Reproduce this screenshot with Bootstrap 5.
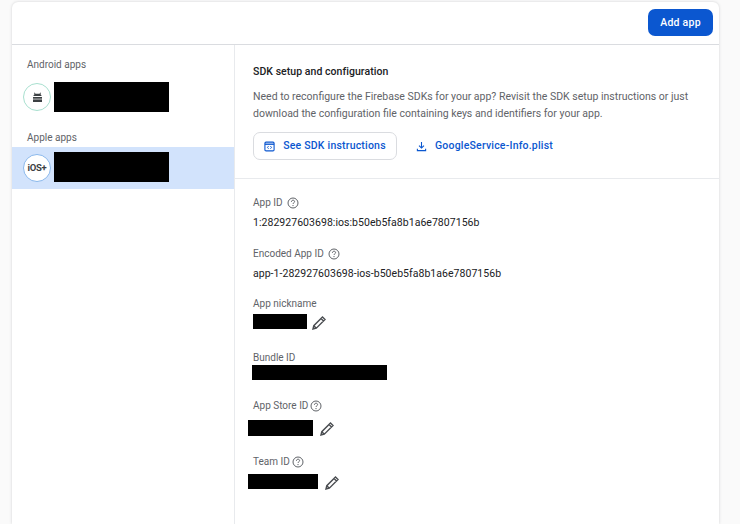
<!DOCTYPE html>
<html lang="en">

<head>
    <meta charset="UTF-8">
    <meta name="viewport" content="width=device-width, initial-scale=1.0">
    <title>Your apps</title>
    <link href="https://cdn.jsdelivr.net/npm/bootstrap@5.3.3/dist/css/bootstrap.min.css" rel="stylesheet">
    <style>
        html, body {
            height: 524px;
            overflow: hidden;
        }

        body {
            background-color: #fafafa;
            font-family: Roboto, "Liberation Sans", sans-serif;
            font-size: 12px;
            color: #202124;
            padding: 2px 21px 0 12px;
        }

        .apps-panel {
            height: 522px;
            background-color: #fff;
            border-radius: 6px 6px 0 0;
            box-shadow: 0 0 3px rgba(60, 64, 67, 0.22);
        }

        .apps-head {
            height: 43px;
            flex-shrink: 0;
            padding: 7px 6px 0 0;
            border-bottom: 1px solid #dadce0;
        }

        .add-btn {
            width: 65px;
            height: 27px;
            padding: 0;
            background-color: #0b57d0;
            border: 0;
            border-radius: 7px;
            color: #fff;
            font-size: 10.5px;
            font-weight: 500;
            letter-spacing: 0.25px;
        }

        .side-col {
            width: 223px;
            flex-shrink: 0;
            border-right: 1px solid #e8eaed;
        }

        .group-name {
            padding-left: 15px;
            color: #5f6368;
            font-size: 10px;
            line-height: 14px;
        }

        .group-android {
            margin-top: 13px;
        }

        .group-apple {
            margin-top: 13px;
            margin-bottom: 2px;
        }

        .app-row {
            height: 42px;
            padding-left: 11px;
        }

        .row-android {
            margin-top: 4px;
        }

        .app-row.picked {
            background-color: #d2e3fc;
        }

        .app-mark {
            width: 28px;
            height: 28px;
            flex-shrink: 0;
            margin-right: 3px;
            background-color: #fff;
            border: 1.5px solid #a8e0cf;
            border-radius: 50%;
            color: #3c4043;
        }

        .app-mark.ios {
            border-color: #8ab8ec;
            font-size: 9.5px;
            font-weight: 700;
            letter-spacing: -0.3px;
        }

        .hidden-bar {
            display: block;
            background-color: #000;
        }

        .bar-app {
            width: 115px;
            height: 30px;
        }

        .picked .bar-app {
            margin-bottom: 2px;
        }

        .bar-nick {
            width: 54px;
            height: 15px;
        }

        .bar-bundle {
            width: 135px;
            height: 15px;
            margin: 0 0 0 -1px;
        }

        .bar-store {
            width: 65px;
            height: 16px;
        }

        .bar-team {
            width: 70px;
            height: 15px;
        }

        .main-col {
            min-width: 0;
        }

        .sdk-part {
            height: 134px;
            padding: 20px 18px 0 18px;
            border-bottom: 1px solid #e8eaed;
        }

        .sdk-title {
            font-size: 10.5px;
            font-weight: 500;
            line-height: 14px;
            letter-spacing: 0.05px;
            margin-bottom: 9px;
        }

        .sdk-text {
            color: #5f6368;
            font-size: 10.5px;
            line-height: 17px;
            margin-bottom: 10px;
            white-space: nowrap;
        }

        .sdk-btn {
            width: 144px;
            height: 28px;
            padding: 0;
            background-color: #fff;
            border: 1px solid #dadce0;
            border-radius: 7px;
            color: #0b57d0;
            font-size: 10.5px;
            font-weight: 500;
            letter-spacing: 0.2px;
        }

        .sdk-link {
            margin-left: 19px;
            color: #0b57d0;
            font-size: 10.5px;
            font-weight: 500;
            letter-spacing: 0.2px;
            text-decoration: none;
        }

        .field-list {
            padding: 17px 0 0 18px;
        }

        .field-name {
            color: #5f6368;
            font-size: 10px;
            line-height: 14px;
        }

        .field-value {
            margin-top: 6px;
            font-size: 10.5px;
            line-height: 14px;
            letter-spacing: 0.04px;
        }

        .gap-encoded {
            margin-top: 17px;
        }

        .gap-nick {
            margin-top: 16px;
        }

        .gap-bundle {
            margin-top: 20px;
        }

        .gap-store {
            margin-top: 19px;
        }

        .gap-team {
            margin-top: 18px;
        }

        .line-nick {
            margin-top: 3px;
        }

        .line-store {
            margin: 7px 0 0 -5px;
        }

        .line-team {
            margin: 5px 0 0 -5px;
        }

        .help-mark {
            margin-left: 4px;
        }

        .gap-store .help-mark, .gap-team .help-mark {
            margin-left: 2px;
        }

        .edit-mark {
            margin-left: 4px;
            margin-top: 1px;
        }

        .line-store .edit-mark, .line-team .edit-mark {
            margin-left: 6px;
        }
    </style>
</head>

<body>
    <div class="apps-panel d-flex flex-column">
        <div class="apps-head d-flex justify-content-end">
            <button type="button" class="btn add-btn">Add app</button>
        </div>
        <div class="d-flex flex-grow-1">
            <div class="side-col">
                <div class="group-name group-android">Android apps</div>
                <div class="app-row row-android d-flex align-items-center">
                    <span class="app-mark d-flex align-items-center justify-content-center">
                        <svg width="11" height="11" viewBox="0 0 11 11" fill="#3c4043">
                            <path d="M2.500.5l1 1.300h4L8.500.5l.6.4-.8 1.200c.8.500 1.200 1.200 1.300 2H1.400c.1-.8.500-1.500 1.300-2L1.900.9z" />
                            <rect x="1" y="5" width="9" height="1.700" />
                            <rect x="1" y="7.400" width="9" height="2.600" />
                        </svg>
                    </span>
                    <span class="hidden-bar bar-app"></span>
                </div>
                <div class="group-name group-apple">Apple apps</div>
                <div class="app-row picked d-flex align-items-center">
                    <span class="app-mark ios d-flex align-items-center justify-content-center">iOS+</span>
                    <span class="hidden-bar bar-app"></span>
                </div>
            </div>
            <div class="main-col flex-grow-1">
                <div class="sdk-part">
                    <div class="sdk-title">SDK setup and configuration</div>
                    <div class="sdk-text">Need to reconfigure the Firebase SDKs for your app? Revisit the SDK setup instructions or just<br>download the configuration file containing keys and identifiers for your app.</div>
                    <div class="d-flex align-items-center">
                        <button type="button" class="btn sdk-btn d-flex align-items-center justify-content-center">
                            <svg class="me-2" width="11" height="11" viewBox="0 0 12 12" fill="none" stroke="#0b57d0" stroke-width="1.200">
                                <rect x="1" y="1.200" width="10" height="9.600" rx="1.200" />
                                <path d="M1 3.500h10" stroke-width="1.500" />
                                <path d="M5 5.500 3.800 7 5 8.500M7 5.500 8.200 7 7 8.500" stroke-width="1" />
                            </svg>
                            See SDK instructions
                        </button>
                        <a href="#" class="sdk-link d-flex align-items-center">
                            <svg class="me-2" width="11" height="11" viewBox="0 0 12 12" fill="none" stroke="#0b57d0" stroke-width="1.200">
                                <path d="M6 1v6.500M3.300 5 6 7.700 8.700 5M1.500 8.500v2h9v-2" />
                            </svg>
                            GoogleService-Info.plist
                        </a>
                    </div>
                </div>
                <div class="field-list">
                    <div class="field-name d-flex align-items-center">App ID
                        <svg class="help-mark" width="12" height="12" viewBox="0 0 12 12" fill="none" stroke="#5f6368"><circle cx="6" cy="6" r="5" /><path d="M4.400 4.800c0-2.100 3.200-2.100 3.200-.2 0 1.200-1.600 1.200-1.600 2.400M6 8v1.100" /></svg>
                    </div>
                    <div class="field-value">1:282927603698:ios:b50eb5fa8b1a6e7807156b</div>
                    <div class="field-name gap-encoded d-flex align-items-center">Encoded App ID
                        <svg class="help-mark" width="12" height="12" viewBox="0 0 12 12" fill="none" stroke="#5f6368"><circle cx="6" cy="6" r="5" /><path d="M4.400 4.800c0-2.100 3.200-2.100 3.200-.2 0 1.200-1.600 1.200-1.600 2.400M6 8v1.100" /></svg>
                    </div>
                    <div class="field-value">app-1-282927603698-ios-b50eb5fa8b1a6e7807156b</div>
                    <div class="field-name gap-nick">App nickname</div>
                    <div class="line-nick d-flex align-items-start">
                        <span class="hidden-bar bar-nick"></span>
                        <svg class="edit-mark" width="16" height="16" viewBox="0 0 16 16" fill="none" stroke="#4a4d51" stroke-width="1.400"><path d="M2 14l.8-3.300L11.500 2 14 4.500l-8.700 8.700zM2.800 10.700l2.500 2.500M10 3.500 12.500 6" /></svg>
                    </div>
                    <div class="field-name gap-bundle">Bundle ID</div>
                    <span class="hidden-bar bar-bundle"></span>
                    <div class="field-name gap-store d-flex align-items-center">App Store ID
                        <svg class="help-mark" width="12" height="12" viewBox="0 0 12 12" fill="none" stroke="#5f6368"><circle cx="6" cy="6" r="5" /><path d="M4.400 4.800c0-2.100 3.200-2.100 3.200-.2 0 1.200-1.600 1.200-1.600 2.400M6 8v1.100" /></svg>
                    </div>
                    <div class="line-store d-flex align-items-start">
                        <span class="hidden-bar bar-store"></span>
                        <svg class="edit-mark" width="16" height="16" viewBox="0 0 16 16" fill="none" stroke="#4a4d51" stroke-width="1.400"><path d="M2 14l.8-3.300L11.500 2 14 4.500l-8.700 8.700zM2.800 10.700l2.500 2.500M10 3.500 12.500 6" /></svg>
                    </div>
                    <div class="field-name gap-team d-flex align-items-center">Team ID
                        <svg class="help-mark" width="12" height="12" viewBox="0 0 12 12" fill="none" stroke="#5f6368"><circle cx="6" cy="6" r="5" /><path d="M4.400 4.800c0-2.100 3.200-2.100 3.200-.2 0 1.200-1.600 1.200-1.600 2.400M6 8v1.100" /></svg>
                    </div>
                    <div class="line-team d-flex align-items-start">
                        <span class="hidden-bar bar-team"></span>
                        <svg class="edit-mark" width="16" height="16" viewBox="0 0 16 16" fill="none" stroke="#4a4d51" stroke-width="1.400"><path d="M2 14l.8-3.300L11.500 2 14 4.500l-8.700 8.700zM2.800 10.700l2.500 2.500M10 3.500 12.500 6" /></svg>
                    </div>
                </div>
            </div>
        </div>
    </div>

    <script src="https://cdn.jsdelivr.net/npm/bootstrap@5.3.3/dist/js/bootstrap.bundle.min.js"></script>
</body>

</html>
